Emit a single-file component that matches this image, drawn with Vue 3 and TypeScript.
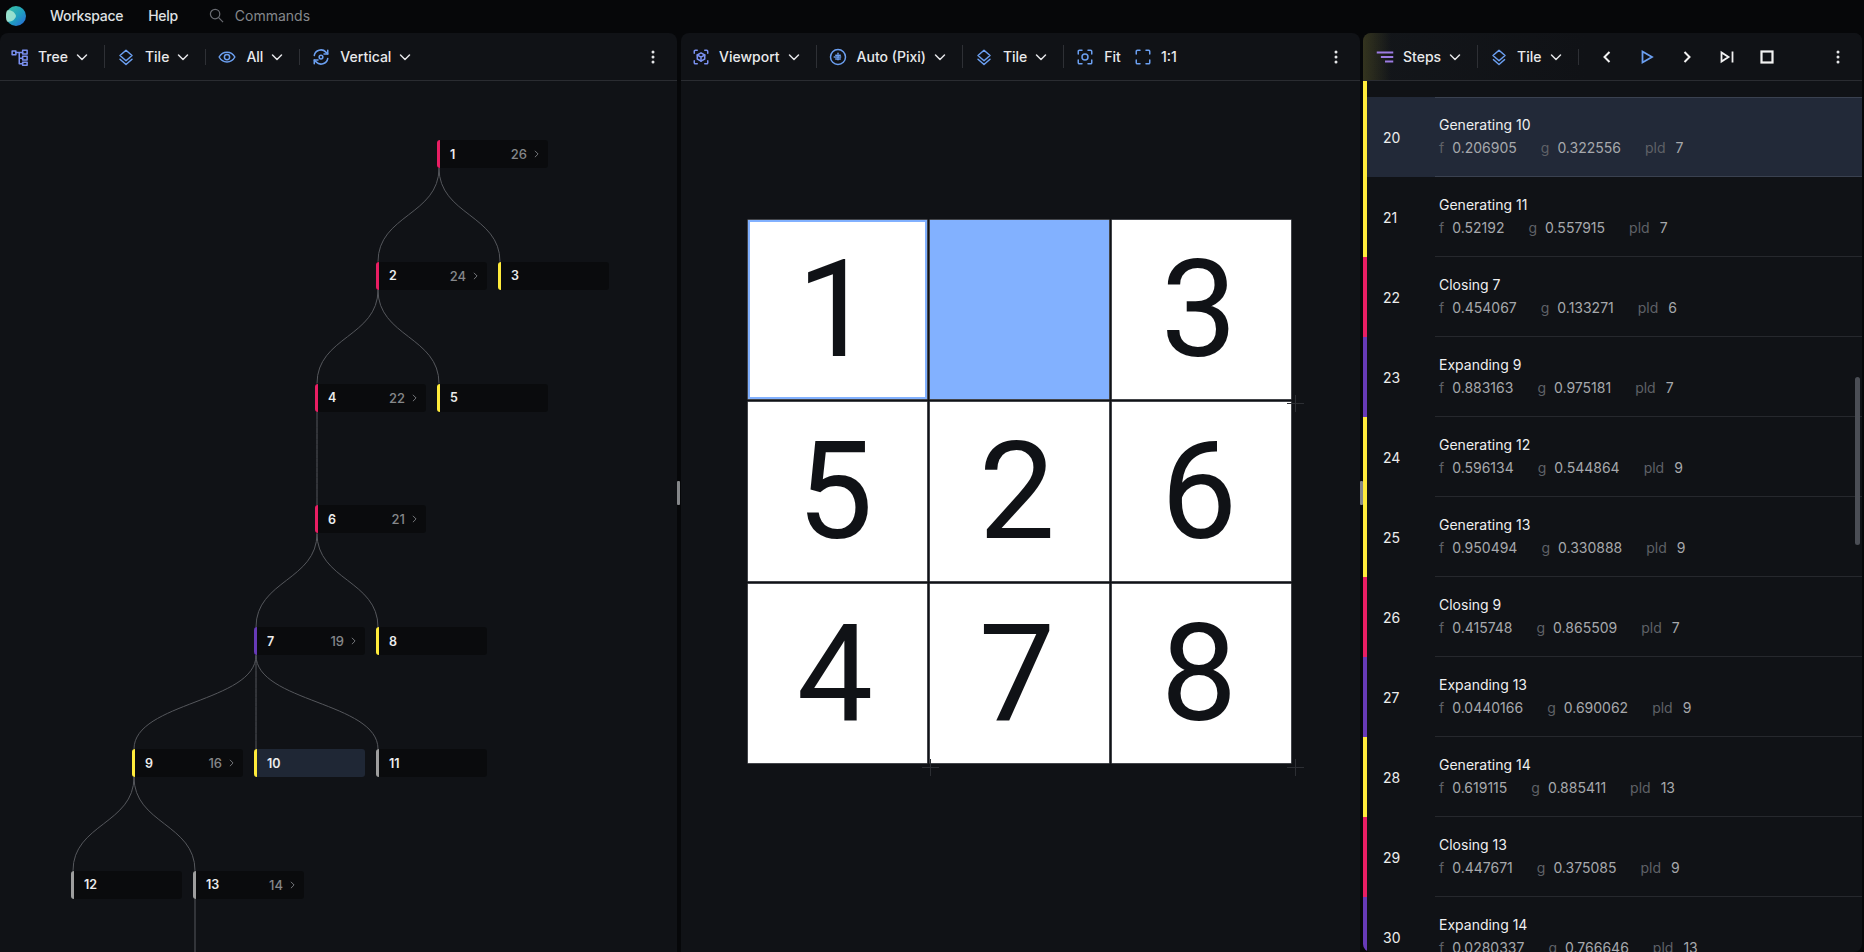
<script setup lang="ts">
interface ToolItem {
  icon: string
  label?: string
  color?: string
  chevron?: boolean
  divider?: 'tall' | 'short'
}

const icons: Record<string, string> = {
  tree: '<rect x="1.500" y="4" width="5" height="5"/><rect x="15.500" y="3" width="6" height="5"/><rect x="15.500" y="11" width="6" height="5"/><rect x="15.500" y="19" width="6" height="4"/><path d="M6.500 6h9M11 6v15h4.500M11 13.500h4.500"/>',
  layers: '<path d="M12 3l8 7-8 7-8-7z"/><path d="M4 15l8 7 8-7"/>',
  eye: '<path d="M1.500 12C4 7.500 7.500 5.500 12 5.500s8 2 10.500 6.500C20 16.500 16.500 18.500 12 18.500S4 16.500 1.500 12z"/><circle cx="12" cy="12" r="3.500"/>',
  vertical: '<path d="M3 10A9 9 0 0 1 18.500 5.500L21 8"/><path d="M21 3v5h-5"/><path d="M21 14A9 9 0 0 1 5.500 18.500L3 16"/><path d="M3 21v-5h5"/><circle cx="12" cy="12" r="2.500"/>',
  viewport: '<path d="M3 7V4.500A1.500 1.500 0 0 1 4.500 3H7M17 3h2.500A1.500 1.500 0 0 1 21 4.500V7M21 17v2.500a1.500 1.500 0 0 1-1.500 1.500H17M7 21H4.500A1.500 1.500 0 0 1 3 19.500V17"/><path d="M12 6.500l5 2.800v5.400l-5 2.800-5-2.800V9.300z"/><path d="M7 9.300l5 2.800 5-2.800M12 12.100v5.400"/>',
  globe: '<circle cx="12" cy="12" r="10"/><path d="M12 7v10M7 12h10M9 9.500h6M9 14.500h6" stroke-dasharray="1 1.500"/>',
  fit: '<path d="M3 8V4.500A1.500 1.500 0 0 1 4.500 3H8M16 3h3.500A1.500 1.500 0 0 1 21 4.500V8M21 16v3.500a1.500 1.500 0 0 1-1.500 1.500H16M8 21H4.500A1.500 1.500 0 0 1 3 19.500V16"/><circle cx="12" cy="12" r="4"/>',
  full: '<path d="M3 8V4.500A1.500 1.500 0 0 1 4.500 3H8M16 3h3.500A1.500 1.500 0 0 1 21 4.500V8M21 16v3.500a1.500 1.500 0 0 1-1.500 1.500H16M8 21H4.500A1.500 1.500 0 0 1 3 19.500V16"/>',
  steps: '<path d="M1 6h22M6.500 12H23M12 18h11" stroke-width="2.600"/>'
}

const blue = '#6b9ff0'

const leftTools: ToolItem[] = [
  { icon: 'tree', label: 'Tree', color: '#7a90f0', chevron: true, divider: 'tall' },
  { icon: 'layers', label: 'Tile', color: blue, chevron: true, divider: 'short' },
  { icon: 'eye', label: 'All', color: blue, chevron: true, divider: 'short' },
  { icon: 'vertical', label: 'Vertical', color: blue, chevron: true }
]

const midTools: ToolItem[] = [
  { icon: 'viewport', label: 'Viewport', color: '#7a90f0', chevron: true, divider: 'tall' },
  { icon: 'globe', label: 'Auto (Pixi)', color: blue, chevron: true, divider: 'tall' },
  { icon: 'layers', label: 'Tile', color: blue, chevron: true, divider: 'tall' },
  { icon: 'fit', label: 'Fit', color: blue },
  { icon: 'full', label: '1:1', color: blue }
]

const rightTools: ToolItem[] = [
  { icon: 'steps', label: 'Steps', color: '#9b7be2', chevron: true, divider: 'tall' },
  { icon: 'layers', label: 'Tile', color: blue, chevron: true, divider: 'short' }
]

const colors = {
  pink: '#e91e63',
  yellow: '#ffeb3b',
  purple: '#673ab7',
  grey: '#9e9e9e'
}

type Tone = keyof typeof colors

interface TreeNode {
  id: number
  x: number
  level: number
  tone: Tone
  count?: number
  parent?: number
  selected?: boolean
}

const nodes: TreeNode[] = [
  { id: 1, x: 437, level: 0, tone: 'pink', count: 26 },
  { id: 2, x: 376, level: 1, tone: 'pink', count: 24, parent: 1 },
  { id: 3, x: 498, level: 1, tone: 'yellow', parent: 1 },
  { id: 4, x: 315, level: 2, tone: 'pink', count: 22, parent: 2 },
  { id: 5, x: 437, level: 2, tone: 'yellow', parent: 2 },
  { id: 6, x: 315, level: 3, tone: 'pink', count: 21, parent: 4 },
  { id: 7, x: 254, level: 4, tone: 'purple', count: 19, parent: 6 },
  { id: 8, x: 376, level: 4, tone: 'yellow', parent: 6 },
  { id: 9, x: 132, level: 5, tone: 'yellow', count: 16, parent: 7 },
  { id: 10, x: 254, level: 5, tone: 'yellow', parent: 7, selected: true },
  { id: 11, x: 376, level: 5, tone: 'grey', parent: 7 },
  { id: 12, x: 71, level: 6, tone: 'grey', parent: 9 },
  { id: 13, x: 193, level: 6, tone: 'grey', count: 14, parent: 9 }
]

const nodeTop = (level: number) => 59 + level * 121.8
const nodeHeight = 28

const edges = nodes
  .filter((n) => n.parent)
  .map((n) => {
    const p = nodes.find((o) => o.id === n.parent)!
    const x1 = p.x + 2
    const y1 = nodeTop(p.level) + nodeHeight
    const x2 = n.x + 2
    const y2 = nodeTop(n.level)
    const mid = (y1 + y2) / 2
    return `M${x1} ${y1}C${x1} ${mid} ${x2} ${mid} ${x2} ${y2}`
  })

const tiles = [1, 0, 3, 5, 2, 6, 4, 7, 8]

const steps: { n: number; title: string; f: string; g: string; pld: number; tone: Tone }[] = [
  { n: 20, title: 'Generating 10', f: '0.206905', g: '0.322556', pld: 7, tone: 'yellow' },
  { n: 21, title: 'Generating 11', f: '0.52192', g: '0.557915', pld: 7, tone: 'yellow' },
  { n: 22, title: 'Closing 7', f: '0.454067', g: '0.133271', pld: 6, tone: 'pink' },
  { n: 23, title: 'Expanding 9', f: '0.883163', g: '0.975181', pld: 7, tone: 'purple' },
  { n: 24, title: 'Generating 12', f: '0.596134', g: '0.544864', pld: 9, tone: 'yellow' },
  { n: 25, title: 'Generating 13', f: '0.950494', g: '0.330888', pld: 9, tone: 'yellow' },
  { n: 26, title: 'Closing 9', f: '0.415748', g: '0.865509', pld: 7, tone: 'pink' },
  { n: 27, title: 'Expanding 13', f: '0.0440166', g: '0.690062', pld: 9, tone: 'purple' },
  { n: 28, title: 'Generating 14', f: '0.619115', g: '0.885411', pld: 13, tone: 'yellow' },
  { n: 29, title: 'Closing 13', f: '0.447671', g: '0.375085', pld: 9, tone: 'pink' },
  { n: 30, title: 'Expanding 14', f: '0.0280337', g: '0.766646', pld: 13, tone: 'purple' }
]
</script>

<template>
  <div class="app">
    <header class="menu">
      <svg class="logo" viewBox="0 0 20 20">
        <defs>
          <linearGradient id="logo-g" x1="0" y1="0" x2="1" y2="1">
            <stop offset="0" stop-color="#3fc7a0" />
            <stop offset="0.55" stop-color="#1f9fc0" />
            <stop offset="1" stop-color="#2a62d8" />
          </linearGradient>
        </defs>
        <circle cx="10" cy="10" r="10" fill="url(#logo-g)" />
        <path d="M1 4.500C5 3.500 9 6 10 10c-1 4-5 6.500-9 5.500-1.500-3.500-1.500-8 0-11z" fill="#a9e8d2" opacity="0.85" />
      </svg>
      <span class="menu-item workspace">Workspace</span>
      <span class="menu-item help">Help</span>
      <svg class="search" viewBox="0 0 16 16" fill="none" stroke="#6a6c72" stroke-width="1.300">
        <circle cx="6.500" cy="6.500" r="5" />
        <path d="M10.300 10.300L15 15" />
      </svg>
      <span class="commands">Commands</span>
    </header>

    <main class="panels">
      <section class="panel left">
        <div class="toolbar">
          <template v-for="t in leftTools" :key="t.label">
            <svg class="icon" viewBox="0 0 24 24" fill="none" :stroke="t.color" stroke-width="2" stroke-linejoin="round" stroke-linecap="round" v-html="icons[t.icon]" />
            <span class="label">{{ t.label }}</span>
            <svg v-if="t.chevron" class="chev" viewBox="0 0 12 12" fill="none" stroke="#e4e5e7" stroke-width="1.500" stroke-linecap="round" stroke-linejoin="round"><path d="M1.500 4l4.500 4.500L10.500 4" /></svg>
            <i v-if="t.divider" class="divider" :class="t.divider" />
          </template>
          <svg class="dots" viewBox="0 0 4 14" fill="#e4e5e7"><circle cx="2" cy="2" r="1.500" /><circle cx="2" cy="7" r="1.500" /><circle cx="2" cy="12" r="1.500" /></svg>
        </div>
        <div class="tree">
          <svg class="edges" width="677" height="871" fill="none" stroke="#55575c" stroke-width="1">
            <path v-for="(d, i) in edges" :key="i" :d="d" />
            <path d="M195 818V871" />
          </svg>
          <div
            v-for="n in nodes"
            :key="n.id"
            class="node"
            :class="{ selected: n.selected }"
            :style="{ left: n.x + 'px', top: nodeTop(n.level) + 'px', borderLeftColor: colors[n.tone] }"
          >
            <span class="node-id">{{ n.id }}</span>
            <template v-if="n.count">
              <span class="node-count">{{ n.count }}</span>
              <svg class="node-chev" viewBox="0 0 6 10" fill="none" stroke="#77797e" stroke-width="1.200"><path d="M1 1l4 4-4 4" /></svg>
            </template>
          </div>
        </div>
      </section>

      <div class="gutter g-left"><i /></div>

      <section class="panel mid">
        <div class="toolbar">
          <template v-for="t in midTools" :key="t.label">
            <svg class="icon" viewBox="0 0 24 24" fill="none" :stroke="t.color" stroke-width="2" stroke-linejoin="round" stroke-linecap="round" v-html="icons[t.icon]" />
            <span class="label">{{ t.label }}</span>
            <svg v-if="t.chevron" class="chev" viewBox="0 0 12 12" fill="none" stroke="#e4e5e7" stroke-width="1.500" stroke-linecap="round" stroke-linejoin="round"><path d="M1.500 4l4.500 4.500L10.500 4" /></svg>
            <i v-if="t.divider" class="divider" :class="t.divider" />
          </template>
          <svg class="dots" viewBox="0 0 4 14" fill="#e4e5e7"><circle cx="2" cy="2" r="1.500" /><circle cx="2" cy="7" r="1.500" /><circle cx="2" cy="12" r="1.500" /></svg>
        </div>
        <div class="canvas">
          <div class="board">
            <div
              v-for="(t, i) in tiles"
              :key="i"
              class="tile"
              :class="{ empty: t === 0, first: t === 1 }"
            >
              {{ t || '' }}
            </div>
            <i class="plus p1" />
            <i class="plus p2" />
            <i class="plus p3" />
          </div>
        </div>
      </section>

      <div class="gutter g-right"><i /></div>

      <section class="panel right">
        <div class="toolbar">
          <template v-for="t in rightTools" :key="t.label">
            <svg class="icon" viewBox="0 0 24 24" fill="none" :stroke="t.color" stroke-width="2" stroke-linejoin="round" v-html="icons[t.icon]" />
            <span class="label">{{ t.label }}</span>
            <svg v-if="t.chevron" class="chev" viewBox="0 0 12 12" fill="none" stroke="#e4e5e7" stroke-width="1.500" stroke-linecap="round" stroke-linejoin="round"><path d="M1.500 4l4.500 4.500L10.500 4" /></svg>
            <i v-if="t.divider" class="divider" :class="t.divider" />
          </template>
          <div class="player">
            <button><svg viewBox="0 0 16 16" fill="none" stroke="#f2f2f2" stroke-width="2"><path d="M10.500 3L5.500 8l5 5" /></svg></button>
            <button><svg viewBox="0 0 16 16" fill="none" stroke="#6b9ff0" stroke-width="1.800"><path d="M3.500 2.500v11L13 8z" /></svg></button>
            <button><svg viewBox="0 0 16 16" fill="none" stroke="#f2f2f2" stroke-width="2"><path d="M5.500 3l5 5-5 5" /></svg></button>
            <button><svg viewBox="0 0 16 16" fill="none" stroke="#f2f2f2" stroke-width="1.800"><path d="M2.500 3.500v9L9.500 8zM13.500 2.500v11" /></svg></button>
            <button><svg viewBox="0 0 16 16" fill="none" stroke="#f2f2f2" stroke-width="2.200"><rect x="2.500" y="2.500" width="11" height="11" /></svg></button>
          </div>
          <svg class="dots" viewBox="0 0 4 14" fill="#e4e5e7"><circle cx="2" cy="2" r="1.500" /><circle cx="2" cy="7" r="1.500" /><circle cx="2" cy="12" r="1.500" /></svg>
        </div>
        <div class="list">
          <div class="list-pad" />
          <div
            v-for="s in steps"
            :key="s.n"
            class="row"
            :class="{ active: s.n === 20 }"
            :style="{ borderLeftColor: colors[s.tone] }"
          >
            <span class="row-n">{{ s.n }}</span>
            <div class="row-body">
              <div class="row-title">{{ s.title }}</div>
              <div class="row-meta">
                <span><em>f</em>{{ s.f }}</span>
                <span><em>g</em>{{ s.g }}</span>
                <span><em class="pld">pld</em>{{ s.pld }}</span>
              </div>
            </div>
          </div>
          <i class="scrollbar" />
        </div>
      </section>
    </main>
  </div>
</template>

<style>
html,
body {
  margin: 0;
  height: 100%;
  overflow: hidden;
  background: #060709;
}
</style>

<style scoped>
.app {
  display: flex;
  flex-direction: column;
  width: 1864px;
  height: 952px;
  overflow: hidden;
  background: #060709;
  color: #e8e9eb;
  font-family: Inter, 'Noto Sans', sans-serif;
  font-size: 14px;
}

.menu {
  display: flex;
  align-items: center;
  flex: none;
  height: 33px;
  padding-left: 6px;
  padding-bottom: 2px;
  box-sizing: border-box;
}

.logo {
  width: 20px;
  height: 20px;
}

.menu-item {
  font-weight: 500;
  letter-spacing: -0.3px;
  color: #dfe0e2;
}

.workspace {
  margin-left: 24px;
}

.help {
  margin-left: 25px;
}

.search {
  width: 15px;
  height: 15px;
  margin-left: 31px;
}

.commands {
  margin-left: 11px;
  color: #85878c;
}

.panels {
  display: flex;
  flex: 1;
  min-height: 0;
  padding-right: 2px;
}

.panel {
  display: flex;
  flex-direction: column;
  min-width: 0;
  overflow: hidden;
  background: #101216;
  border-radius: 8px 8px 0 0;
}

.left {
  width: 677px;
  flex: none;
}

.mid {
  width: 679px;
  flex: none;
}

.right {
  flex: 1;
  border-radius: 8px 8px 8px 8px;
}

.gutter {
  display: flex;
  align-items: center;
  flex: none;
  background: #060709;
}

.g-left {
  width: 4px;
}

.g-right {
  width: 3px;
  justify-content: flex-end;
}

.gutter i {
  display: block;
  width: 3px;
  height: 24px;
  background: #85878a;
  border-radius: 1px;
}

.toolbar {
  display: flex;
  align-items: center;
  flex: none;
  height: 47px;
  padding-left: 11px;
  padding-right: 22px;
  border-bottom: 1px solid #2a2c31;
}

.right .toolbar {
  padding-left: 13px;
  background: linear-gradient(90deg, rgba(255, 235, 59, 0.14), rgba(255, 235, 59, 0) 28px), linear-gradient(90deg, #13161a, #101216 45%);
}

.icon {
  width: 18px;
  height: 18px;
  flex: none;
}

.label {
  margin-left: 9px;
  font-weight: 500;
  color: #e8e9eb;
  white-space: nowrap;
}

.chev {
  width: 12px;
  height: 12px;
  flex: none;
  margin-left: 8px;
}

.divider {
  display: block;
  width: 1px;
  flex: none;
  margin: 0 12px 0 16px;
  background: #2e3035;
}

.left .divider + .icon + .label {
  margin-left: 10px;
}

.mid .divider + .icon + .label {
  margin-left: 10px;
}

.divider.tall {
  height: 23px;
}

.divider.short {
  height: 16px;
}

.mid .label + .icon {
  margin-left: 13px;
}

.dots {
  width: 4px;
  height: 14px;
  margin-left: auto;
  flex: none;
}

.tree {
  position: relative;
  flex: 1;
  min-height: 0;
}

.edges {
  position: absolute;
  left: 0;
  top: 0;
}

.node {
  position: absolute;
  box-sizing: border-box;
  display: flex;
  align-items: center;
  width: 111px;
  height: 28px;
  padding: 0 9px 0 10px;
  background: #0a0b0d;
  border-left: 3px solid;
  border-radius: 3px;
}

.node.selected {
  background: #1f2735;
}

.node-id {
  font-size: 12.500px;
  font-weight: 600;
  color: #eceded;
}

.node-count {
  margin-left: auto;
  font-size: 13px;
  font-weight: 500;
  color: #85878a;
}

.node-chev {
  width: 5px;
  height: 8px;
  margin-left: 7px;
}

.canvas {
  flex: 1;
  min-height: 0;
  padding: 139px 0 0 67px;
}

.board {
  position: relative;
  display: grid;
  grid-template-columns: repeat(3, 179px);
  grid-auto-rows: 179px;
  gap: 3px;
  width: 543px;
}

.tile {
  display: flex;
  align-items: center;
  justify-content: center;
  box-sizing: border-box;
  padding-right: 5px;
  background: #fff;
  box-shadow: 0 0 0 0.500px #77797e;
  color: #101216;
  font-family: Roboto, 'Liberation Sans', sans-serif;
  font-size: 136px;
  line-height: 1;
}

.tile.first {
  border: 2px solid #82b1ff;
}

.tile.empty {
  background: #82b1ff;
}

.plus {
  position: absolute;
  width: 17px;
  height: 17px;
  background:
    linear-gradient(#2c2e33, #2c2e33) center / 17px 1px no-repeat,
    linear-gradient(#2c2e33, #2c2e33) center / 1px 17px no-repeat;
}

.p1 {
  left: 174px;
  top: 539px;
}

.p2 {
  left: 539px;
  top: 539px;
}

.p3 {
  left: 539px;
  top: 175px;
}

.player {
  display: flex;
  gap: 10px;
  margin-left: 1px;
}

.player button {
  display: flex;
  align-items: center;
  justify-content: center;
  width: 30px;
  height: 32px;
  padding: 0;
  border: 0;
  background: none;
}

.player svg {
  width: 16px;
  height: 16px;
}

.list {
  position: relative;
  flex: 1;
  min-height: 0;
  overflow: hidden;
}

.list-pad {
  height: 16px;
  border-left: 4px solid #ffeb3b;
}

.row {
  display: flex;
  height: 80px;
  box-sizing: border-box;
  border-left: 4px solid;
}

.row.active {
  background: #222938;
}

.row-n {
  align-self: center;
  width: 68px;
  flex: none;
  padding-left: 16px;
  box-sizing: border-box;
  color: #eceded;
}

.row-body {
  flex: 1;
  padding: 17px 0 0 4px;
  border-bottom: 1px solid #26282d;
}

.active .row-body {
  border-top: 1px solid #3a4150;
  border-bottom-color: #3a4150;
  padding-top: 16px;
}

.row-title {
  height: 23px;
  line-height: 22px;
  color: #eeeff0;
}

.row-meta {
  display: flex;
  gap: 24px;
  height: 22px;
  line-height: 22px;
  color: #a6a8ac;
}

.row-meta em {
  margin-right: 8px;
  font-style: normal;
  color: #5f6167;
}

.row-meta em.pld {
  margin-right: 10px;
}

.scrollbar {
  position: absolute;
  right: 2px;
  top: 296px;
  width: 5px;
  height: 168px;
  border-radius: 3px;
  background: #4b4e55;
}
</style>
